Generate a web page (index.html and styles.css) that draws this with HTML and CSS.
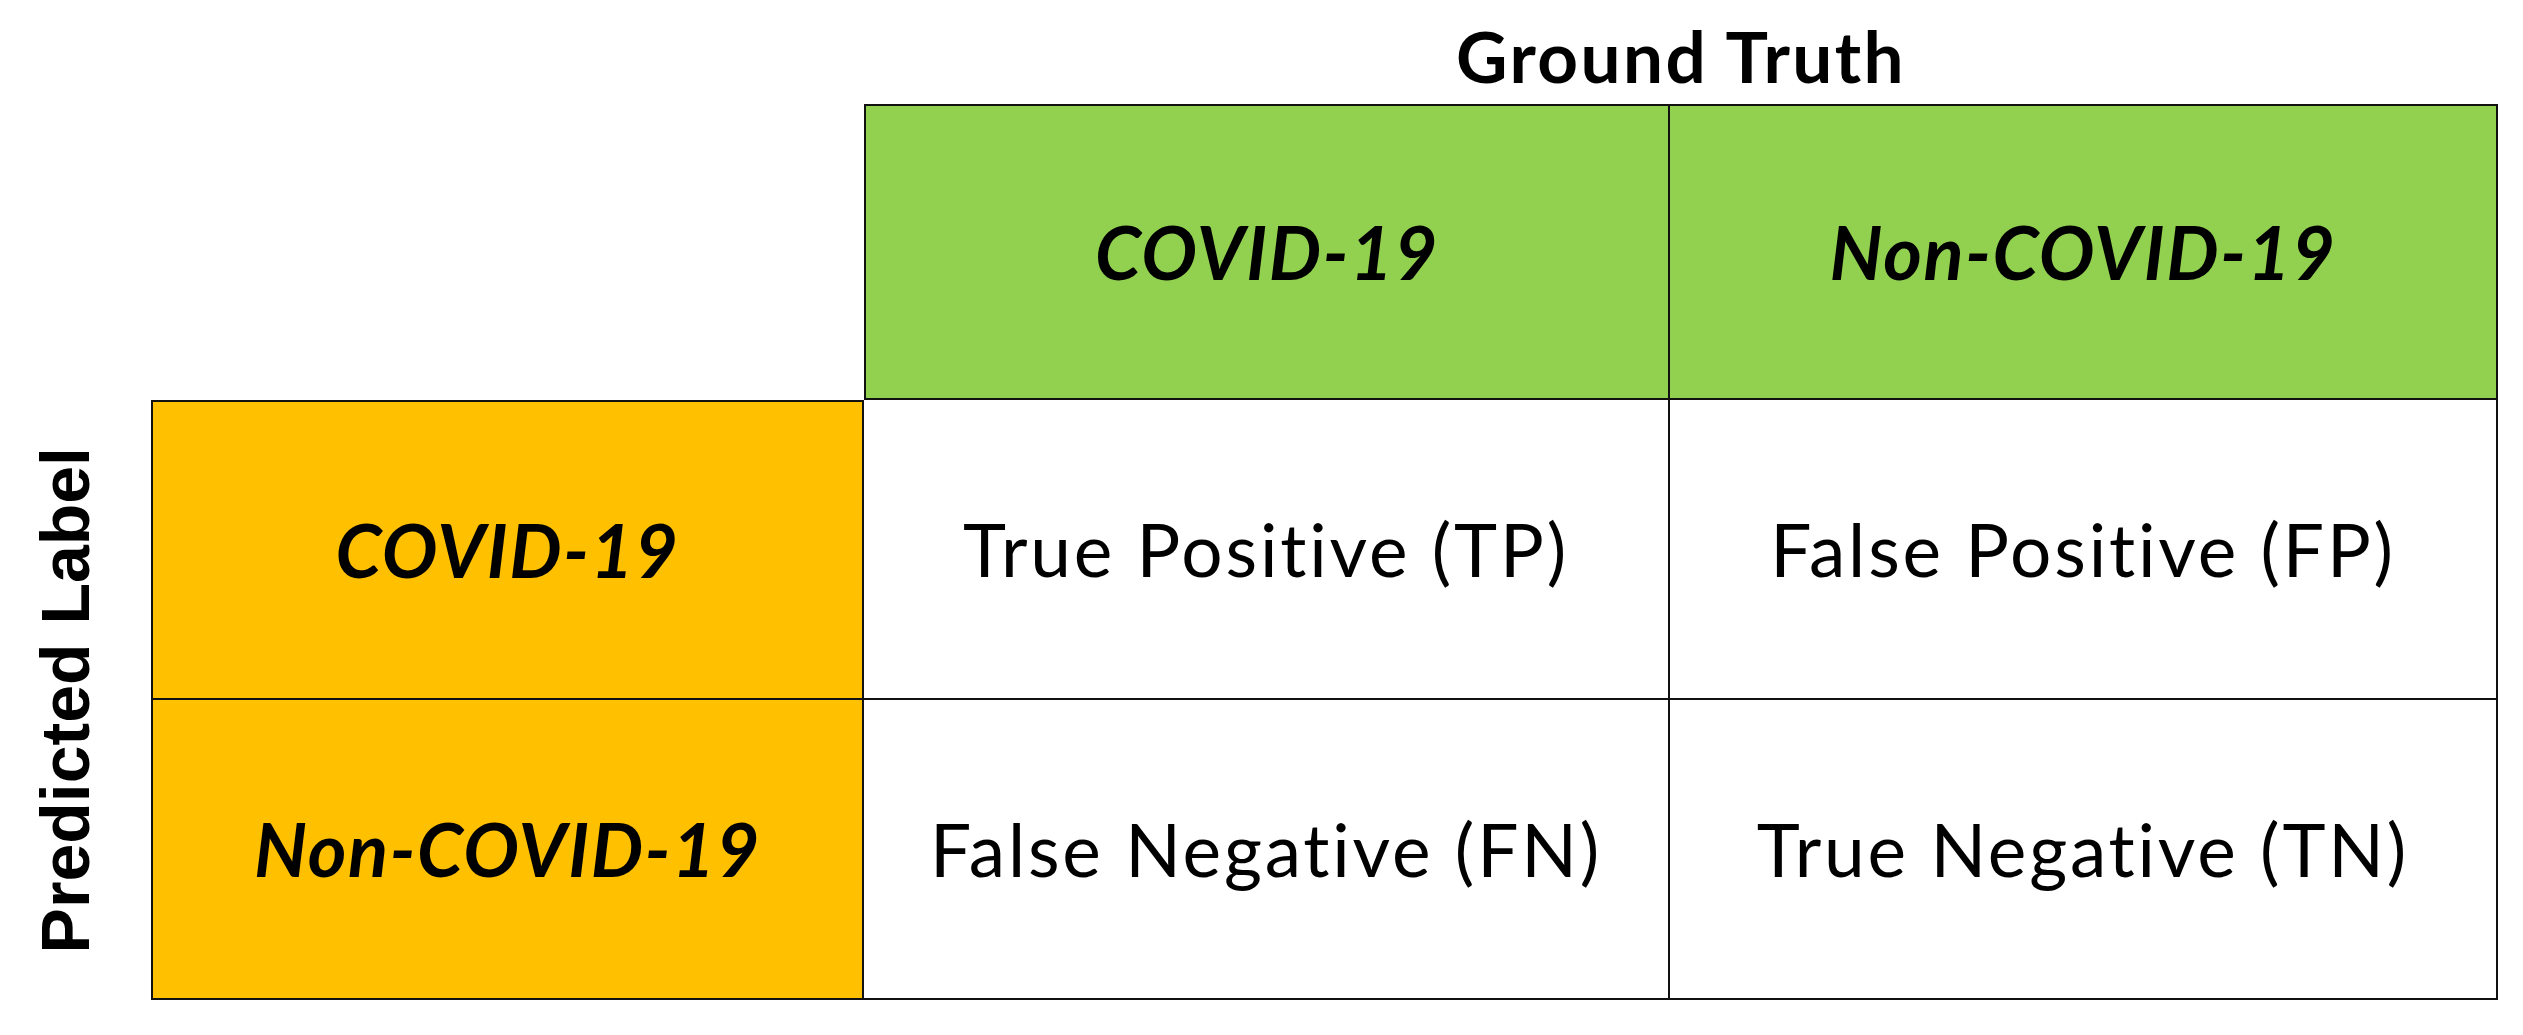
FILE: index.html
```html
<!DOCTYPE html>
<html lang="en">
<head>
<meta charset="utf-8">
<title>Confusion Matrix</title>
<link rel="stylesheet" href="styles.css">
</head>
<body>
<div class="figure">
  <div class="title">Ground Truth</div>
  <div class="side"><span>Predicted Label</span></div>
  <div class="cell head c1 first-head">COVID-19</div>
  <div class="cell head c2">Non-COVID-19</div>
  <div class="cell rowlab r1 first-row">COVID-19</div>
  <div class="cell body c1 r1">True Positive (TP)</div>
  <div class="cell body c2 r1">False Positive (FP)</div>
  <div class="cell rowlab r2">Non-COVID-19</div>
  <div class="cell body c1 r2">False Negative (FN)</div>
  <div class="cell body c2 r2">True Negative (TN)</div>
</div>
</body>
</html>
```
FILE: styles.css
```css
html, body {
  margin: 0;
  padding: 0;
  background: #ffffff;
}
.figure {
  display: grid;
  grid-template-columns: 151px 713px 806px 828px;
  grid-template-rows: 104px 296px 300px 300px;
  color: #000;
}
.title {
  grid-column: 3 / 5;
  grid-row: 1;
  display: flex;
  justify-content: center;
  align-items: flex-start;
  padding-top: 20px;
  font-family: Lato, "Open Sans", sans-serif;
  font-weight: 700;
  font-size: 71px;
  letter-spacing: 2.4px;
  line-height: 1;
}
.side {
  grid-column: 1;
  grid-row: 3 / 5;
  display: flex;
  align-items: center;
  justify-content: center;
  padding-right: 22px;
}
.side span {
  writing-mode: vertical-rl;
  transform: rotate(180deg);
  font-family: "Liberation Sans", Arial, sans-serif;
  font-weight: 700;
  font-size: 68px;
  line-height: 1;
}
.cell {
  box-sizing: border-box;
  display: flex;
  align-items: center;
  justify-content: center;
  border-right: 2px solid #111;
  border-bottom: 2px solid #111;
  font-family: Lato, "Open Sans", sans-serif;
  font-variant-ligatures: none;
  line-height: 1;
}
.c1 { grid-column: 3; }
.c2 { grid-column: 4; }
.r1 { grid-row: 3; }
.r2 { grid-row: 4; }
.head {
  grid-row: 2;
  background: #92d050;
  border-top: 2px solid #111;
  font-weight: 700;
  font-style: italic;
  font-size: 74px;
  letter-spacing: 1.6px;
}
.first-head {
  border-left: 2px solid #111;
}
.rowlab {
  grid-column: 2;
  background: #ffc000;
  border-left: 2px solid #111;
  font-weight: 700;
  font-style: italic;
  font-size: 74px;
  letter-spacing: 1.6px;
}
.first-row {
  border-top: 2px solid #111;
}
.body {
  background: #ffffff;
  font-weight: 400;
  font-size: 73px;
  letter-spacing: 2.8px;
}
```
